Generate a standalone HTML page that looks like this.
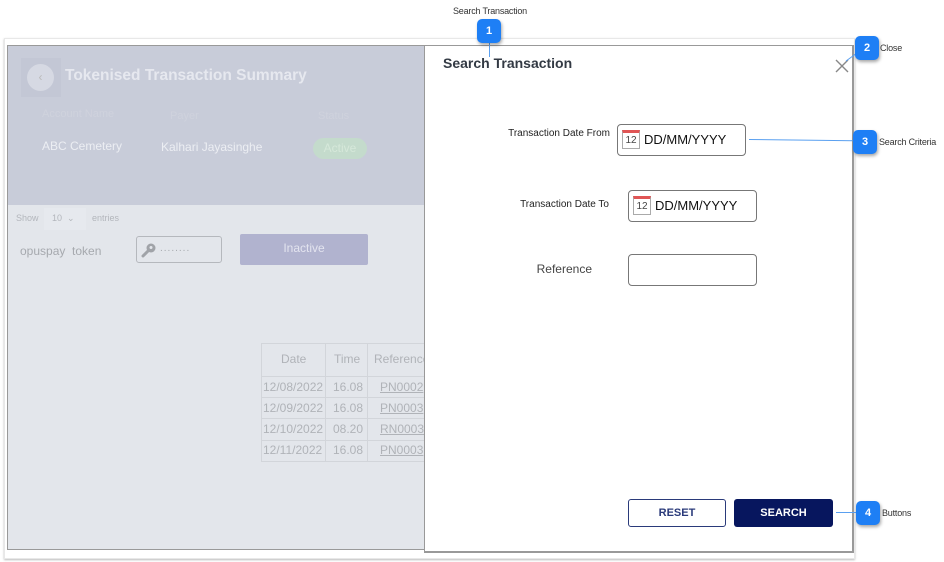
<!DOCTYPE html>
<html><head><meta charset="utf-8">
<style>
*{box-sizing:border-box;margin:0;padding:0}
body{width:944px;height:562px;background:#fff;position:relative;overflow:hidden;font-family:"Liberation Sans",sans-serif}
.a{position:absolute}
.badge{position:absolute;width:24px;height:24px;border-radius:5px;background:#1e7ff5;color:#fff;font-size:11px;font-weight:bold;text-align:center;line-height:24px;box-shadow:1px 2px 3px rgba(0,0,0,.35)}
.lbl{position:absolute;font-size:9px;color:#333;letter-spacing:-.2px}
.cal{position:absolute;width:18px;height:19px;border:1px solid #aaa;background:#fff;border-top:3px solid #e05555;font-size:10px;color:#444;text-align:center;line-height:15px}
.inp{position:absolute;border:1px solid #777;border-radius:4px;background:#fff;height:32px;width:129px}
.inp span{position:absolute;left:26px;top:7px;font-size:13px;color:#111}
.fl{position:absolute;font-size:10px;color:#222;text-align:right}
.td{position:absolute;font-size:12px;color:#b0b3b8}
</style></head><body>
<div class="a" style="left:4px;top:38px;width:851px;height:521px;border:1px solid #e8e8e8;box-shadow:0 1px 2px #bbb"></div>
<div class="a" style="left:7px;top:45px;width:418px;height:505px;background:#e3e6eb;border:1px solid #999;border-right:none"></div>
<div class="a" style="left:7px;top:45px;width:418px;height:160px;background:#c8ccd9;border-left:1px solid #999;border-top:1px solid #999"></div>
<div class="a" style="left:21px;top:58px;width:40px;height:39px;background:#c3c7d5"></div>
<div class="a" style="left:27px;top:64px;width:27px;height:27px;border-radius:50%;background:#d6d9e3;color:#bbb;font-size:12px;text-align:center;line-height:27px">&lsaquo;</div>
<div class="a" style="left:65px;top:67px;font-size:15.5px;font-weight:bold;color:#e6e8ef">Tokenised Transaction Summary</div>
<div class="a" style="left:42px;top:108px;font-size:11px;color:#cfd2dd">Account Name</div>
<div class="a" style="left:170px;top:110px;font-size:11px;color:#cfd2dd">Payer</div>
<div class="a" style="left:318px;top:110px;font-size:11px;color:#cfd2dd">Status</div>
<div class="a" style="left:42px;top:139px;font-size:12px;color:#eceef3">ABC Cemetery</div>
<div class="a" style="left:161px;top:140px;font-size:12px;color:#eceef3">Kalhari Jayasinghe</div>
<div class="a" style="left:313px;top:138px;width:54px;height:21px;border-radius:11px;background:#c4dbcc;color:#d6e8da;font-size:12px;text-align:center;line-height:21px">Active</div>
<div class="a" style="left:16px;top:213px;font-size:9px;color:#b3b6bc">Show</div>
<div class="a" style="left:44px;top:208px;width:42px;height:22px;background:#e6e9ee"></div>
<div class="a" style="left:52px;top:213px;font-size:9px;color:#b3b6bc">10 &nbsp;&#8964;</div>
<div class="a" style="left:92px;top:213px;font-size:9px;color:#b3b6bc">entries</div>
<div class="a" style="left:20px;top:244px;font-size:12px;color:#a6a9ae">opuspay&nbsp; token</div>
<div class="a" style="left:136px;top:236px;width:86px;height:27px;border:1px solid #b5b8bd;border-radius:3px"></div>
<svg class="a" style="left:141px;top:242px" width="16" height="16" viewBox="0 0 16 16"><circle cx="10" cy="6" r="4.5" fill="#a0a3a8"/><circle cx="10" cy="5.5" r="1.5" fill="#e3e6eb"/><path d="M7 9 L2 14" stroke="#a0a3a8" stroke-width="3" stroke-linecap="round"/></svg>
<div class="a" style="left:160px;top:243px;font-size:10px;color:#a6a9ae;letter-spacing:1px">........</div>
<div class="a" style="left:240px;top:234px;width:128px;height:31px;background:#b1b3cf;border-radius:2px;color:#e3e4ef;font-size:12px;text-align:center;line-height:29px">Inactive</div>
<div class="a" style="left:261px;top:343px;width:164px;height:119px;border:1px solid #d2d5da"></div>
<div class="a" style="left:325px;top:343px;width:1px;height:119px;background:#d2d5da"></div>
<div class="a" style="left:367px;top:343px;width:1px;height:119px;background:#d2d5da"></div>
<div class="a" style="left:261px;top:376px;width:164px;height:1px;background:#d2d5da"></div>
<div class="a" style="left:261px;top:397px;width:164px;height:1px;background:#d2d5da"></div>
<div class="a" style="left:261px;top:418px;width:164px;height:1px;background:#d2d5da"></div>
<div class="a" style="left:261px;top:440px;width:164px;height:1px;background:#d2d5da"></div>
<div class="td" style="left:281px;top:352px">Date</div>
<div class="td" style="left:334px;top:352px">Time</div>
<div class="td" style="left:374px;top:352px;white-space:nowrap;width:50px;overflow:hidden">Reference</div>
<div class="td" style="left:263px;top:380px">12/08/2022</div><div class="td" style="left:333px;top:380px">16.08</div><div class="td" style="left:380px;top:380px;text-decoration:underline;width:44px;overflow:hidden">PN0002</div>
<div class="td" style="left:263px;top:401px">12/09/2022</div><div class="td" style="left:333px;top:401px">16.08</div><div class="td" style="left:380px;top:401px;text-decoration:underline;width:44px;overflow:hidden">PN0003</div>
<div class="td" style="left:263px;top:422px">12/10/2022</div><div class="td" style="left:333px;top:422px">08.20</div><div class="td" style="left:380px;top:422px;text-decoration:underline;width:44px;overflow:hidden">RN0003</div>
<div class="td" style="left:263px;top:443px">12/11/2022</div><div class="td" style="left:333px;top:443px">16.08</div><div class="td" style="left:380px;top:443px;text-decoration:underline;width:44px;overflow:hidden">PN0003</div>
<div class="a" style="left:424px;top:45px;width:430px;height:508px;background:#fff;border:1px solid #999;border-width:1px 2px 2px 1px"></div>
<div class="a" style="left:443px;top:55px;font-size:14px;font-weight:bold;color:#333a44">Search Transaction</div>
<svg class="a" style="left:835px;top:59px" width="14" height="14" viewBox="0 0 14 14"><path d="M1 1L13 13M13 1L1 13" stroke="#888" stroke-width="1.4"/></svg>
<div class="fl" style="left:480px;top:128px;width:130px">Transaction Date From</div>
<div class="inp" style="left:617px;top:124px"><div class="cal" style="left:4px;top:5px">12</div><span>DD/MM/YYYY</span></div>
<div class="fl" style="left:480px;top:199px;width:129px">Transaction Date To</div>
<div class="inp" style="left:628px;top:190px"><div class="cal" style="left:4px;top:5px">12</div><span>DD/MM/YYYY</span></div>
<div class="fl" style="left:500px;top:262px;width:92px;font-size:12px;color:#444">Reference</div>
<div class="inp" style="left:628px;top:254px"></div>
<div class="a" style="left:628px;top:499px;width:98px;height:28px;border:1.5px solid #2a3a7a;border-radius:3px;color:#2a3a7a;font-size:11px;font-weight:bold;text-align:center;line-height:26px">RESET</div>
<div class="a" style="left:734px;top:499px;width:99px;height:28px;background:#07165e;border-radius:3px;color:#fff;font-size:11px;font-weight:bold;text-align:center;line-height:28px">SEARCH</div>
<div class="lbl" style="left:453px;top:6px">Search Transaction</div>
<div class="a" style="left:489px;top:40px;width:1px;height:17px;background:#5aa0f0"></div>
<div class="badge" style="left:477px;top:19px">1</div>
<svg class="a" style="left:845px;top:50px" width="15" height="12"><path d="M1 11L12 3" stroke="#5aa0f0"/></svg>
<div class="badge" style="left:855px;top:36px">2</div>
<div class="lbl" style="left:880px;top:43px">Close</div>
<div class="a" style="left:749px;top:139px;width:105px;height:1px;background:#5aa0f0;transform:rotate(0.7deg);transform-origin:left"></div>
<div class="badge" style="left:853px;top:130px">3</div>
<div class="lbl" style="left:879px;top:137px">Search Criteria</div>
<div class="a" style="left:836px;top:512px;width:20px;height:1px;background:#5aa0f0"></div>
<div class="badge" style="left:856px;top:501px">4</div>
<div class="lbl" style="left:882px;top:508px">Buttons</div>
</body></html>
